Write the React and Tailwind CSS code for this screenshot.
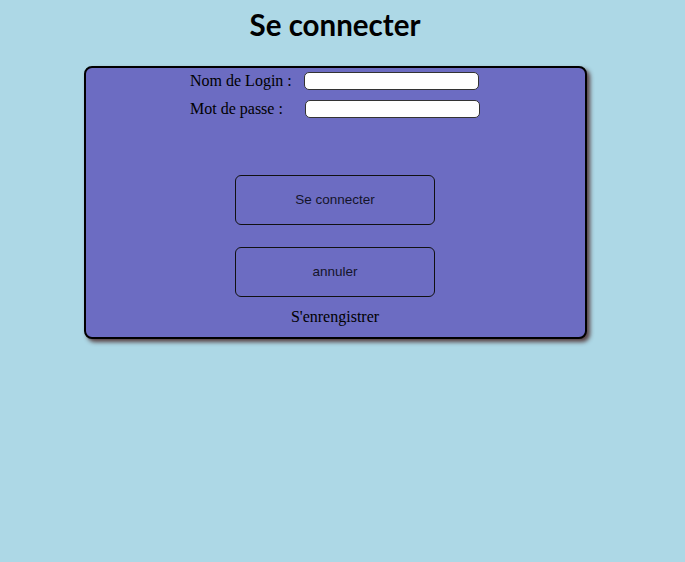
export default function App() {
  return (
    <div className="min-h-screen w-full bg-[#add8e6]">
      <div className="w-[670px]">
        <h1 className="pt-[6px] h-[66px] text-center text-[29.5px] leading-[38px] font-bold text-black font-['Lato','Open_Sans',sans-serif]">
          Se connecter
        </h1>
        <div className="mx-auto w-[503px] h-[273px] rounded-[8px] border-2 border-black bg-[#6c6cc2] shadow-[3px_3px_4px_rgba(70,35,35,0.85)] flex flex-col items-center pt-[4px] font-['Liberation_Serif',serif] text-black">
          <div className="grid grid-cols-[114px_176px] gap-y-[10px] items-center">
            <label className="text-[16px] leading-[18px]">Nom de Login :</label>
            <input className="h-[18px] w-[175px] rounded-[5px] border border-[#333] bg-white" />
            <label className="text-[16px] leading-[18px]">Mot de passe :</label>
            <input className="h-[18px] w-[175px] ml-[1px] rounded-[5px] border border-[#333] bg-white" />
          </div>
          <button className="mt-[57px] h-[50px] w-[200px] rounded-[6px] border border-[#111] text-[13.5px] text-[#14142a] font-['Liberation_Sans',Arial,sans-serif]">
            Se connecter
          </button>
          <button className="mt-[22px] h-[50px] w-[200px] rounded-[6px] border border-[#111] text-[13.5px] text-[#14142a] font-['Liberation_Sans',Arial,sans-serif]">
            annuler
          </button>
          <div className="mt-[10px] text-[16px] leading-[20px]">S'enrengistrer</div>
        </div>
      </div>
    </div>
  );
}
